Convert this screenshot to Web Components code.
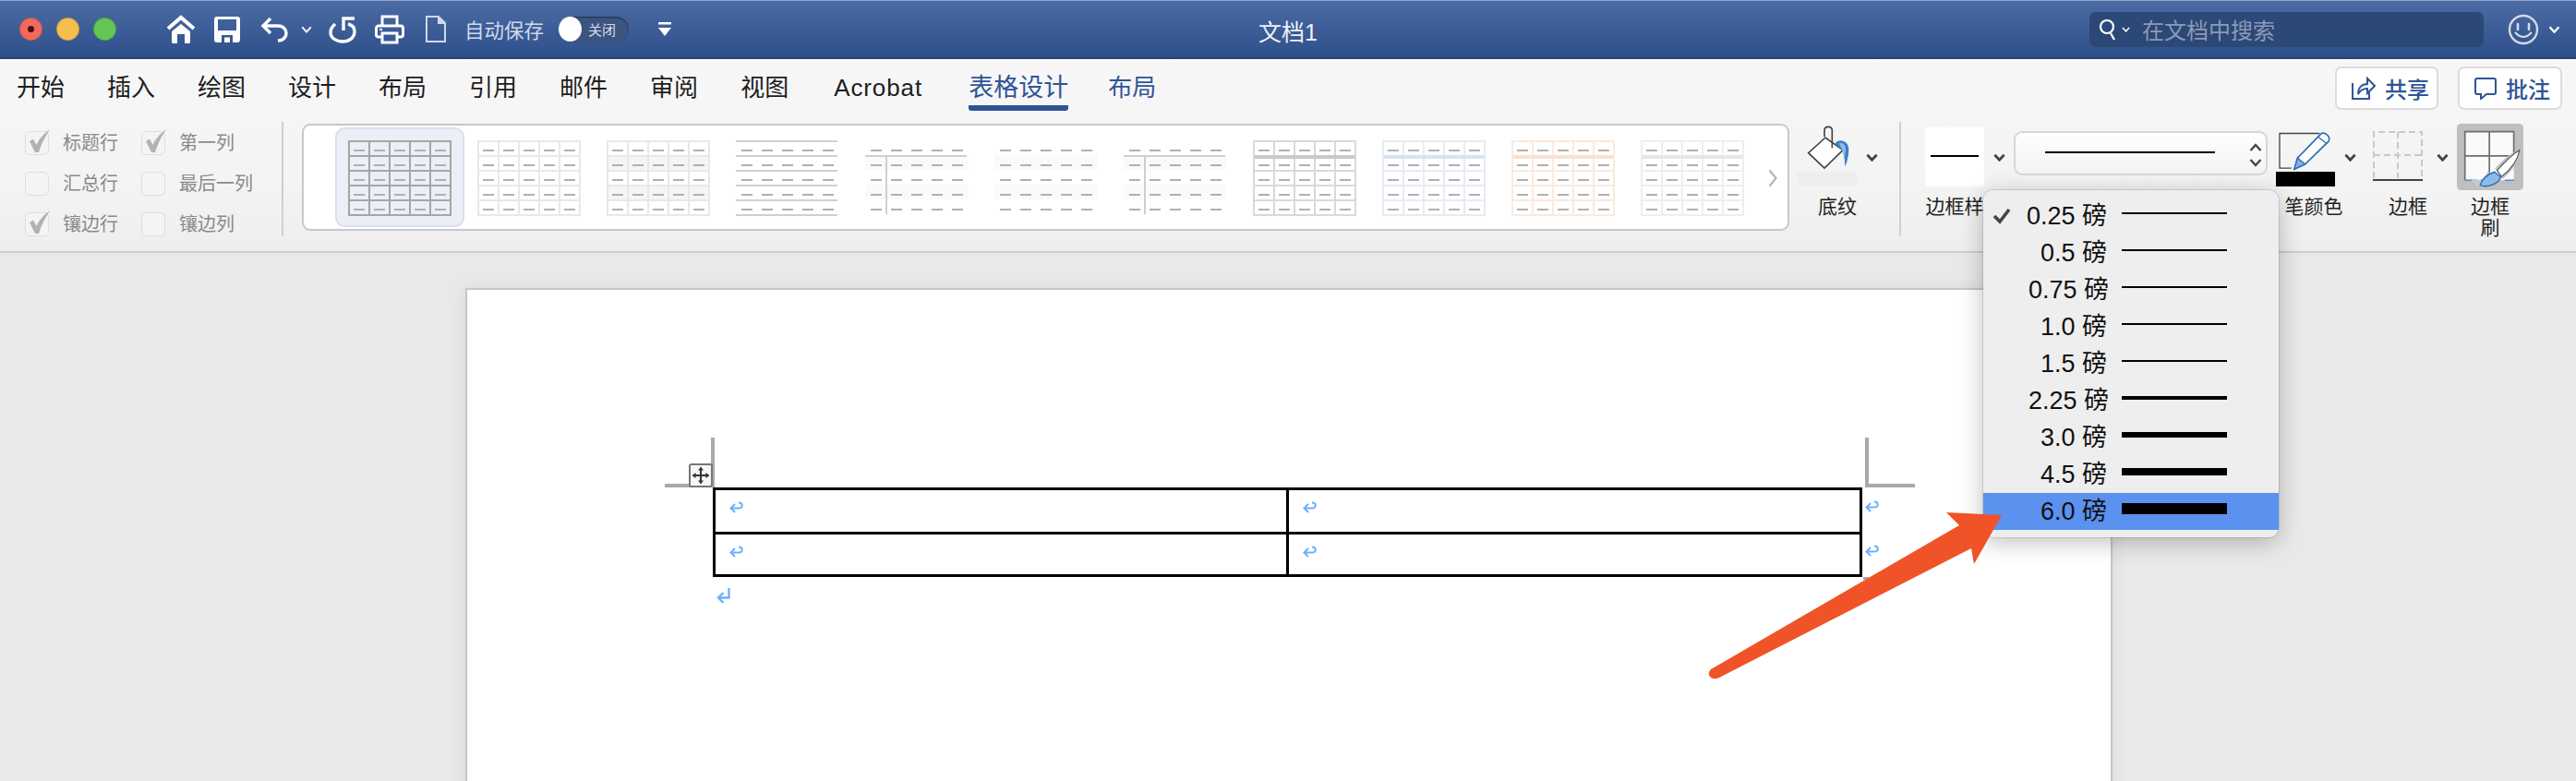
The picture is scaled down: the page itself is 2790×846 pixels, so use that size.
<!DOCTYPE html>
<html lang="zh-CN">
<head>
<meta charset="utf-8">
<title>文档1</title>
<style>
    html, body { margin: 0; height: 100%; background: #e9e9e9; overflow: hidden; }
    body { font-family: "Liberation Sans", "Noto Sans CJK SC", sans-serif; }
</style>
</head>
<body>
<word-app></word-app>
<script>
const chev = (color, w = 14, h = 9, sw = 3) => `<svg width="${w}" height="${h}" viewBox="0 0 14 9" style="display:block"><path d="M1.5 1.5 7 7.5l5.5-6" fill="none" stroke="${color}" stroke-width="${sw}"/></svg>`;

class TitleBar extends HTMLElement {
    connectedCallback() {
        this.attachShadow({ mode: 'open' });
        this.shadowRoot.innerHTML = `
            <style>
                :host {
                    display: grid;
                    grid-template-columns: 1fr auto 1fr;
                    align-items: center;
                    height: 64px;
                    box-sizing: border-box;
                    background: linear-gradient(#4a6ba3, #2f4f8b);
                    border-top: 1px solid #8fa4c8;
                    border-bottom: 2px solid #27426f;
                    color: #fff;
                }
                .left, .right { display: flex; align-items: center; }
                .left { padding-left: 21px; }
                .right { justify-content: flex-end; padding-right: 17px; }
                .dot { width: 25px; height: 25px; border-radius: 50%; margin-right: 15px; box-sizing: border-box; border: 1px solid rgba(0,0,0,.18); display: flex; align-items: center; justify-content: center; }
                .dot i { width: 7px; height: 7px; border-radius: 50%; background: #4d0b08; }
                svg { display: block; flex: none; }
                .auto { margin-left: 20px; font-size: 21.5px; color: #cfd9ea; white-space: nowrap; }
                .toggle { margin-left: 16px; width: 76px; height: 28px; border-radius: 14px; background: #3c5480; display: flex; align-items: center; box-shadow: inset 0 1px 2px rgba(0,0,0,.45); }
                .toggle i { width: 25px; height: 27px; border-radius: 50%; background: #fff; }
                .toggle span { margin-left: 7px; font-size: 15px; color: #d6deeb; }
                .title { font-size: 25px; color: #eef1f7; padding-top: 2px; }
                .search { width: 427px; height: 38px; border-radius: 7px; background: #2c4877; display: flex; align-items: center; padding-left: 11px; box-sizing: border-box; }
                .search span { margin-left: 13px; font-size: 24px; color: #8b9ab6; white-space: nowrap; }
            </style>
            <div class="left">
                <div class="dot" style="background:#ee6a5f"><i></i></div>
                <div class="dot" style="background:#f6be4f"></div>
                <div class="dot" style="background:#62c554"></div>
                <svg style="margin-left:39px" width="32" height="31" viewBox="0 0 32 31"><path d="M2 15 16 3l14 12" fill="none" stroke="#fff" stroke-width="4"/><path d="M6 18 16 10l10 8v11.500a1.500 1.500 0 0 1-1.500 1.500H20V21h-8v10H7.500A1.500 1.500 0 0 1 6 29.500z" fill="#fff"/></svg>
                <svg style="margin-left:20px" width="28" height="28" viewBox="0 0 28 28"><path fill-rule="evenodd" d="M3 0h22a3 3 0 0 1 3 3v22a3 3 0 0 1-3 3H3a3 3 0 0 1-3-3V3a3 3 0 0 1 3-3zM4 3v12h20V3zM8 20v8h12v-8zM11 22.500h6V28h-6z" fill="#fff"/></svg>
                <svg style="margin-left:22px" width="30" height="28" viewBox="0 0 30 28" fill="none" stroke="#fff" stroke-width="3.400"><path d="M11 2 3 10l8 8"/><path d="M3 10h16c6 0 9 4 9 8s-3 8-9 8"/></svg>
                <div style="margin-left:14px">${chev('#fff', 12, 8, 2.2)}</div>
                <svg style="margin-left:18px" width="30" height="30" viewBox="0 0 30 30" fill="none" stroke="#fff" stroke-width="3.400"><path d="M7 9C3.500 12 2 15 2 18c0 6 6 10 13 10s13-4 13-11c0-4-3-7-7-8"/><path d="M16 16V3h12"/></svg>
                <svg style="margin-left:20px" width="32" height="32" viewBox="0 0 32 32" fill="none" stroke="#fff" stroke-width="3"><path d="M8 12V2h16v10"/><path d="M8 24H4a2.500 2.500 0 0 1-2.500-2.500v-7A2.500 2.500 0 0 1 4 12h24a2.500 2.500 0 0 1 2.500 2.500v7A2.500 2.500 0 0 1 28 24h-4"/><path d="M8 20h16v10H8z"/><path d="M5 16h3" stroke-width="2"/></svg>
                <svg style="margin-left:23px" width="22" height="29" viewBox="0 0 22 29" fill="none" stroke="#cfd9ea" stroke-width="2"><path d="M1 1h13l7 7v20H1z"/><path d="M14 1v7h7" fill="#cfd9ea"/></svg>
                <span class="auto">自动保存</span>
                <div class="toggle"><i></i><span>关闭</span></div>
                <svg style="margin-left:32px" width="14" height="15" viewBox="0 0 14 15"><path d="M0 0h14v2.500H0zM0 6h14l-7 9z" fill="#fff"/></svg>
            </div>
            <div class="title">文档1</div>
            <div class="right">
                <div class="search">
                    <svg width="24" height="30" viewBox="0 0 24 30" fill="none" stroke="#fff" stroke-width="2.200"><circle cx="8" cy="12" r="7"/><path d="m12 19 4 7"/></svg>
                    ${chev('#fff', 9, 6, 2.4)}
                    <span>在文档中搜索</span>
                </div>
                <svg style="margin-left:26px" width="34" height="34" viewBox="0 0 34 34" fill="none" stroke="#d3d8e3"><circle cx="17" cy="17" r="15" stroke-width="2.400"/><path d="M11 11v6M23 11v6" stroke-width="2.600" stroke-linecap="round"/><path d="M8 20q9 10 18 0" stroke-width="2.200"/></svg>
                <div style="margin-left:10px">${chev('#fff', 13, 8, 2.6)}</div>
            </div>
        `;
    }
}

class RibbonTabs extends HTMLElement {
    connectedCallback() {
        this.attachShadow({ mode: 'open' });
        const names = ['开始', '插入', '绘图', '设计', '布局', '引用', '邮件', '审阅', '视图'];
        this.shadowRoot.innerHTML = `
            <style>
                :host { display: flex; height: 70px; padding-left: 18px; box-sizing: border-box; color: #1d1d1d; }
                .tab { font-size: 26px; line-height: 32px; margin-top: 15px; margin-right: 46px; height: 41px; box-sizing: border-box; white-space: nowrap; }
                .acro { margin-left: 3px; width: 100px; font-size: 26px; letter-spacing: .9px; }
                .on { color: #2f5496; border-bottom: 6px solid #2f5496; border-radius: 0 0 3px 3px; font-size: 27px; height: 41px; width: 108px; margin-right: 43px; }
                .blue { color: #2f5496; }
                .btn { width: 112px; height: 47px; margin-top: 8px; box-sizing: border-box; background: #fff; border: 2px solid #dcdcdc; border-radius: 7px; display: flex; align-items: center; padding-left: 16px; color: #2f5496; font-size: 24px; font-weight: 500; }
                .btn span { margin-left: 10px; }
                .btn svg { flex: none; }
            </style>
            ${names.map(n => `<div class="tab">${n}</div>`).join('')}
            <div class="tab acro">Acrobat</div>
            <div class="tab on">表格设计</div>
            <div class="tab blue">布局</div>
            <div class="btn" style="margin-left:auto">
                <svg width="26" height="27" viewBox="0 0 26 27" fill="none" stroke="#2f5496" stroke-width="2"><path d="M1 8v17h18v-7"/><path d="M7 20c0-7 4-11 10-11V3l8 8-8 8v-5c-4 0-8 2-10 6z"/></svg>
                <span>共享</span>
            </div>
            <div class="btn" style="margin:8px 15px 0 21px;width:113px">
                <svg width="24" height="24" viewBox="0 0 24 24" fill="none" stroke="#2f5496" stroke-width="2"><path d="M3 1h18a2 2 0 0 1 2 2v13a2 2 0 0 1-2 2h-8l-6 5v-5H3a2 2 0 0 1-2-2V3a2 2 0 0 1 2-2z"/></svg>
                <span>批注</span>
            </div>
        `;
    }
}

class StyleOption extends HTMLElement {
    connectedCallback() {
        this.attachShadow({ mode: 'open' });
        const text = this.getAttribute('text');
        const on = this.hasAttribute('on');
        this.shadowRoot.innerHTML = `
            <style>
                :host { display: flex; align-items: center; height: 44px; color: #8a8a8a; font-size: 20px; white-space: nowrap; }
                .box { position: relative; width: 26px; height: 26px; box-sizing: border-box; border: 1px solid #dedede; border-radius: 5px; background: #f4f4f4; margin-right: 15px; }
                svg { position: absolute; left: 4px; top: -3px; }
                span { margin-top: -3px; }
            </style>
            <div class="box">${on ? `<svg width="22" height="26" viewBox="0 0 22 26"><path d="M0 13 4 10.500 7.500 17C10 11 15 5 22 0 17 8 13 15 10 25H6z" fill="#b2b2b2"/></svg>` : ''}</div>
            <span>${text}</span>
        `;
    }
}

class TableThumb extends HTMLElement {
    connectedCallback() {
        this.attachShadow({ mode: 'open' });
        const kind = this.getAttribute('kind') || 'grid';
        const line = this.getAttribute('line') || '#e8e8e8';
        const band = this.getAttribute('band');
        const shade = this.getAttribute('shade');
        const xs = [1, 23, 45, 67, 89, 111];
        const ys = [1, 17, 33, 49, 65, 81];
        let s = '';
        if (shade) s += `<rect x="0" y="16" width="112" height="16" fill="${shade}"/><rect x="0" y="48" width="112" height="16" fill="${shade}"/>`;
        if (kind === 'grid') {
            xs.forEach(x => s += `<rect x="${x - 1}" y="0" width="2" height="82" fill="${line}"/>`);
            ys.forEach(y => s += `<rect x="0" y="${y - 1}" width="112" height="2" fill="${line}"/>`);
        }
        if (kind === 'rows') ys.forEach(y => s += `<rect x="0" y="${y - 1}" width="110" height="2" fill="${line}"/>`);
        if (kind === 'tee') s += `<rect x="0" y="16" width="110" height="2" fill="${line}"/><rect x="22" y="16" width="2" height="64" fill="${line}"/>`;
        if (band) s += `<rect x="2" y="16" width="108" height="4" fill="${band}"/>`;
        for (let r = 0; r < 5; r++) for (let c = 0; c < 5; c++) s += `<rect x="${6 + c * 22}" y="${10 + r * 16}" width="12" height="2" fill="#b0b0b0"/>`;
        this.shadowRoot.innerHTML = `
            <style>:host { display: block; width: 112px; height: 82px; flex: none; } svg { display: block; }</style>
            <svg width="112" height="82" viewBox="0 0 112 82">${s}</svg>
        `;
    }
}

class ThumbGallery extends HTMLElement {
    connectedCallback() {
        this.attachShadow({ mode: 'open' });
        this.shadowRoot.innerHTML = `
            <style>
                :host { display: flex; align-items: flex-start; position: relative; width: 1611px; height: 116px; box-sizing: border-box; background: #fff; border: 2px solid #c8c8c8; border-radius: 9px; padding: 16px 0 0 48px; gap: 28px; }
                .sel { position: absolute; left: 34px; top: 2px; width: 140px; height: 108px; box-sizing: border-box; background: #ebeff7; border: 2px solid #d6e0ef; border-radius: 10px; }
                ::slotted(table-thumb) { position: relative; }
                .more { position: absolute; left: 1586px; top: 47px; }
            </style>
            <div class="sel"></div>
            <slot></slot>
            <svg class="more" width="10" height="20" viewBox="0 0 10 20"><path d="m1.500 1.500 7 8.500-7 8.500" fill="none" stroke="#b5b5b5" stroke-width="2.200"/></svg>
        `;
    }
}

class RibbonTool extends HTMLElement {
    connectedCallback() {
        this.attachShadow({ mode: 'open' });
        const label = this.getAttribute('label');
        this.shadowRoot.innerHTML = `
            <style>
                :host { display: block; flex: none; }
                .art { height: 74px; display: flex; align-items: flex-start; }
                .label { font-size: 21px; line-height: 23px; color: #1f1f1f; text-align: center; margin-top: 4px; white-space: pre-line; }
            </style>
            <div class="art"><slot></slot></div>
            <div class="label" style="${this.getAttribute('label-style') || ''}">${label}</div>
        `;
    }
}

class WeightMenu extends HTMLElement {
    connectedCallback() {
        this.attachShadow({ mode: 'open' });
        const items = [
            ['0.25', 2, 0], ['0.5', 2, 0], ['0.75', 2, 2], ['1.0', 2, 0], ['1.5', 2, 0],
            ['2.25', 4, 2], ['3.0', 6, 0], ['4.5', 8, 0], ['6.0', 12, 0]
        ];
        this.shadowRoot.innerHTML = `
            <style>
                :host { position: absolute; left: 2148px; top: 206px; width: 320px; height: 376px; box-sizing: border-box; padding-top: 8px; background: #eeeeee; border-radius: 11px; box-shadow: 0 5px 26px rgba(0,0,0,.26), 0 0 0 1px rgba(0,0,0,.1); color: #111; z-index: 5; }
                .row { position: relative; height: 40px; display: flex; align-items: center; }
                .row.hit { background: #5b91ef; }
                .txt { width: 134px; text-align: right; font-size: 27px; white-space: nowrap; margin-top: -6px; }
                .bar { position: absolute; left: 150px; width: 114px; background: #000; }
                svg { position: absolute; left: 10px; top: 11px; }
            </style>
            ${items.map((it, i) => `
                <div class="row ${i === 8 ? 'hit' : ''}">
                    ${i === 0 ? `<svg width="20" height="18" viewBox="0 0 20 18"><path d="M2 9l6 6L18 2" fill="none" stroke="#454545" stroke-width="3.600"/></svg>` : ''}
                    <span class="txt" style="margin-left:${it[2]}px">${it[0]} 磅</span>
                    <span class="bar" style="height:${it[1]}px;top:${17 - it[1] / 2}px"></span>
                </div>`).join('')}
        `;
    }
}

class RibbonTools extends HTMLElement {
    connectedCallback() {
        this.attachShadow({ mode: 'open' });
        const dark = '#444';
        this.shadowRoot.innerHTML = `
            <style>
                :host { display: flex; align-items: flex-start; height: 138px; box-sizing: border-box; padding-left: 27px; }
                .opts { display: grid; grid-template-columns: 126px 152px; margin-top: -1px; }
                .sep { flex: none; width: 2px; height: 124px; background: #d0d0d0; margin-top: -2px; }
                .chev { flex: none; margin-top: 32px; }
                svg { display: block; flex: none; }
                .swatch { width: 64px; height: 16px; }
                .combo { flex: none; width: 275px; height: 48px; margin: 8px 0 0 0; box-sizing: border-box; border: 2px solid #d6d6d6; border-radius: 9px; background: linear-gradient(#fff, #f3f3f3); display: flex; align-items: center; padding-left: 32px; position: relative; }
                .combo i { display: block; width: 184px; height: 2px; background: #000; margin-top: -2px; }
                .combo svg { position: absolute; right: 4px; top: 10px; }
                .col { display: flex; flex-direction: column; }
            </style>
            <div class="opts">
                <style-option text="标题行" on></style-option>
                <style-option text="第一列" on></style-option>
                <style-option text="汇总行"></style-option>
                <style-option text="最后一列"></style-option>
                <style-option text="镶边行" on></style-option>
                <style-option text="镶边列"></style-option>
            </div>
            <div class="sep"></div>
            <div style="margin-left:20px;flex:none"><slot></slot></div>

            <ribbon-tool label="底纹" label-style="width:86px" style="margin-left:9px">
                <div class="col">
                    <svg width="58" height="52" viewBox="18 30 174 156"><path d="M108 75 53 125l52 49 60-58z" fill="#fff" stroke="${dark}" stroke-width="5"/><path d="M105 72V52c0-16 25-16 25 0v57" fill="none" stroke="${dark}" stroke-width="5"/><path d="M140 94c10-18 46-10 44 22-1 22-6 40-12 54-1-24-3-40-10-52-6-8-15-14-22-24z" fill="#3b7fc8"/><path d="M152 94c10-6 24 4 22 22l-4 26c-2-16-8-30-18-48z" fill="#8fbbe6"/></svg>
                    <div class="swatch" style="background:#eeeeee"></div>
                </div>
            </ribbon-tool>
            <div class="chev" style="margin-left:-12px">${chev(dark, 13, 9, 3)}</div>
            <div class="sep" style="margin-left:23px"></div>

            <ribbon-tool label="边框样" label-style="width:64px" style="margin-left:26px">
                <div style="width:64px;height:64px;margin-top:4px;background:#fff;display:flex;align-items:center;justify-content:center"><i style="display:block;width:52px;height:2px;background:#000;margin-top:-2px"></i></div>
            </ribbon-tool>
            <div class="chev" style="margin-left:10px">${chev(dark, 13, 9, 3)}</div>

            <div class="combo" style="margin-left:9px">
                <i></i>
                <svg width="14" height="28" viewBox="0 0 14 28" fill="none" stroke="${dark}" stroke-width="2.400"><path d="m1.500 9 5.500-6 5.500 6M1.500 19l5.500 6 5.500-6"/></svg>
            </div>

            <ribbon-tool label="笔颜色" label-style="width:82px" style="margin-left:9px">
                <div class="col">
                    <svg width="64" height="52" viewBox="28 30 192 153"><path d="M170 60H40v113h38" fill="none" stroke="${dark}" stroke-width="4"/><path d="M88 176l10-36 76-78c10-10 34 8 25 24l-76 74z" fill="#fdfdfd" stroke="#2d6cb5" stroke-width="5"/><path d="M88 176l10-36 25 20z" fill="#7fb0e0" stroke="#2d6cb5" stroke-width="4"/><path d="m166 72 28 22" stroke="#2d6cb5" stroke-width="4"/></svg>
                    <div class="swatch" style="background:#000"></div>
                </div>
            </ribbon-tool>
            <div class="chev" style="margin-left:-8px">${chev(dark, 13, 9, 3)}</div>

            <ribbon-tool label="边框" label-style="width:76px" style="margin-left:18px">
                <svg width="54" height="54" viewBox="0 0 54 54" style="margin-top:8px" fill="none"><path d="M1 51V1h52v50M27 1v50M1 26h52" stroke="#c9c9c9" stroke-width="2" stroke-dasharray="7 4"/><path d="M0 53h54" stroke="${dark}" stroke-width="2"/></svg>
            </ribbon-tool>
            <div class="chev" style="margin-left:-7px">${chev(dark, 13, 9, 3)}</div>

            <ribbon-tool label="边框\n刷" label-style="width:72px" style="margin-left:9px">
                <svg width="72" height="72" viewBox="615 27 215 215"><rect x="615" y="27" width="215" height="215" rx="14" fill="#bfbfbf"/><path d="M641 53h158v157H641z" fill="#fafafa"/><path d="M641 210V53h158v100M720 53v157M641 131h158" fill="none" stroke="#6f6f66" stroke-width="5"/><path d="M641 210h40M770 210h30" stroke="#4a90d9" stroke-width="4"/><path d="M738 172C765 140 795 118 826 106 820 142 795 180 762 206z" fill="#c4c4c4"/><path d="M660 204c16 8 30 6 44-2l12-22 24 30c-14 14-34 24-54 22-10-6-20-16-26-28z" fill="#c9c9c9"/><path d="M745 178C770 150 795 125 818 112 812 145 790 175 760 198z" fill="#fff" stroke="#555" stroke-width="3.500"/><path d="M690 226c6-21 25-36 47-43l20 17c-7 18-32 32-57 29z" fill="#8bbbe8" stroke="#2d6cb5" stroke-width="4"/></svg>
            </ribbon-tool>
        `;
    }
}

class DocTable extends HTMLElement {
    connectedCallback() {
        this.attachShadow({ mode: 'open' });
        const mark = `<svg class="ret" width="15" height="13" viewBox="0 0 15 13" fill="none" stroke="#6cb0fb" stroke-width="2"><path d="M1.500 7.500H10c5 0 5-6 0-6"/><path d="M6 3 1.500 7.500 6 12"/></svg>`;
        this.shadowRoot.innerHTML = `
            <style>
                :host { display: block; position: relative; width: 1245px; }
                .grid { display: grid; grid-template-columns: 621px 1fr; grid-template-rows: 48px 46px; height: 97px; box-sizing: border-box; border: 3px solid #000; }
                .cell { padding: 12px 0 0 15px; box-sizing: border-box; }
                .cell:nth-child(odd) { border-right: 3px solid #000; }
                .cell:nth-child(-n+2) { border-bottom: 3px solid #000; }
                .ret { display: block; }
                .mk { position: absolute; background: #a9a9a9; }
                .abs { position: absolute; }
                .move { position: absolute; left: -26px; top: -26px; width: 26px; height: 26px; box-sizing: border-box; background: #f6f6f6; border: 2px solid #777; border-radius: 3px; }
            </style>
            <div class="mk" style="left:-2px;top:-54px;width:4px;height:54px"></div>
            <div class="mk" style="left:-52px;top:-4px;width:50px;height:4px"></div>
            <div class="mk" style="left:1248px;top:-54px;width:4px;height:54px"></div>
            <div class="mk" style="left:1248px;top:-4px;width:54px;height:4px"></div>
            <div class="mk" style="left:1246px;top:97px;width:6px;height:3px"></div>
            <div class="move">
                <svg width="22" height="22" viewBox="0 0 22 22" style="display:block"><path d="M11 4v14M4 11h14" stroke="#333" stroke-width="2"/><path d="M11 1.500l3 4H8zM11 20.500l3-4H8zM1.500 11l4-3v6zM20.500 11l-4-3v6z" fill="#333"/></svg>
            </div>
            <div class="grid">
                <div class="cell">${mark}</div><div class="cell">${mark}</div>
                <div class="cell">${mark}</div><div class="cell">${mark}</div>
            </div>
            <div class="abs" style="left:1248px;top:14px">${mark}</div>
            <div class="abs" style="left:1248px;top:62px">${mark}</div>
            <svg class="abs" style="left:4px;top:109px" width="15" height="18" viewBox="0 0 15 18" fill="none" stroke="#6cb0fb" stroke-width="2.400"><path d="M13.500 0v10.500H2"/><path d="M7.500 5 2 10.500 7.500 16"/></svg>
        `;
    }
}

class WordApp extends HTMLElement {
    connectedCallback() {
        this.attachShadow({ mode: 'open' });
        this.shadowRoot.innerHTML = `
            <style>
                :host { display: block; position: relative; width: 2790px; height: 846px; overflow: hidden; background: #e9e9e9; font-family: "Liberation Sans", "Noto Sans CJK SC", sans-serif; }
                .ribbon { height: 210px; box-sizing: border-box; background: linear-gradient(#f7f7f7, #f3f3f3 70%, #eeeeee); border-bottom: 2px solid #cdcdcd; }
                .page { margin: 38px 0 0 504px; width: 1784px; height: 600px; box-sizing: border-box; background: #fff; border: 2px solid #c6c6c6; border-bottom: 0; box-shadow: 0 0 18px rgba(0,0,0,.07); padding: 214px 0 0 266px; }
                .arrow { position: absolute; left: 0; top: 0; z-index: 6; pointer-events: none; }
            </style>
            <title-bar></title-bar>
            <div class="ribbon">
                <ribbon-tabs></ribbon-tabs>
                <ribbon-tools>
                    <thumb-gallery>
                        <table-thumb line="#a6a6a6"></table-thumb>
                        <table-thumb></table-thumb>
                        <table-thumb shade="#f5f5f5"></table-thumb>
                        <table-thumb kind="rows" line="#cfcfcf"></table-thumb>
                        <table-thumb kind="tee" line="#cfcfcf" shade="#fafafa"></table-thumb>
                        <table-thumb kind="none" shade="#fafafa"></table-thumb>
                        <table-thumb kind="tee" line="#cfcfcf" shade="#fafafa"></table-thumb>
                        <table-thumb line="#d9d9d9" band="#c9c9c9"></table-thumb>
                        <table-thumb line="#e7ebf6" band="#d9e2f3"></table-thumb>
                        <table-thumb line="#fbeade" band="#f9e1d2"></table-thumb>
                        <table-thumb line="#eeeeee" band="#e6e6e6"></table-thumb>
                    </thumb-gallery>
                </ribbon-tools>
            </div>
            <div class="page"><doc-table></doc-table></div>
            <weight-menu></weight-menu>
            <svg class="arrow" width="2790" height="846" viewBox="0 0 2790 846"><path d="M2168 558 2108 555 2122 569 1853 725Q1849 729 1852 733 1856 737 1862 734L2135 594 2138 611z" fill="#f05327"/></svg>
        `;
    }
}

customElements.define('style-option', StyleOption);
customElements.define('table-thumb', TableThumb);
customElements.define('thumb-gallery', ThumbGallery);
customElements.define('ribbon-tool', RibbonTool);
customElements.define('ribbon-tabs', RibbonTabs);
customElements.define('ribbon-tools', RibbonTools);
customElements.define('title-bar', TitleBar);
customElements.define('weight-menu', WeightMenu);
customElements.define('doc-table', DocTable);
customElements.define('word-app', WordApp);
</script>
</body>
</html>
